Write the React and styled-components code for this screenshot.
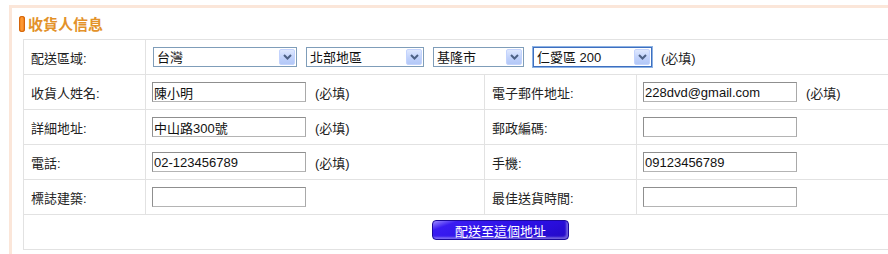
import styled, { createGlobalStyle } from "styled-components"

const GlobalStyle = createGlobalStyle`
    html, body {
        margin: 0;
        padding: 0;
        background: #fff;
    }
    body {
        font-family: "Liberation Sans", "Noto Sans CJK TC", sans-serif;
        font-size: 13px;
        color: #222;
    }
`

const Page = styled.div`
    width: 888px;
    height: 254px;
    overflow: hidden;
`

const Panel = styled.div`
    margin: 5px 0 0 9px;
    width: 1000px;
    border-top: 3px solid #fbe6d9;
    border-left: 3px solid #fbe6d9;
    padding: 0 0 6px 7px;
`

const Heading = styled.h2`
    display: flex;
    align-items: center;
    gap: 3px;
    height: 31px;
    margin: 0;
    font-size: 15px;
    font-weight: bold;
    color: #e3922a;
    font-family: "Liberation Sans", "Noto Sans CJK TC", sans-serif;
`

const Pill = styled.span`
    width: 6px;
    height: 16px;
    border-radius: 3px;
    background: linear-gradient(90deg, #ef7a10 0%, #ff9f3a 50%, #ea7008 100%);
    box-shadow: inset 0 0 0 1px #d4650a;
`

const Table = styled.div`
    margin-left: 4px;
    width: 954px;
    display: grid;
    grid-template-columns: 122px 339px 152px 1fr;
    border-top: 1px solid #e2e2e2;
    border-left: 1px solid #e2e2e2;
`

const Cell = styled.div`
    grid-column: span ${p => p.$span || 1};
    height: 35px;
    box-sizing: border-box;
    border-right: 1px solid #e2e2e2;
    border-bottom: 1px solid #e2e2e2;
    display: flex;
    align-items: center;
    justify-content: ${p => (p.$center ? "center" : "flex-start")};
    gap: 9px;
    padding: ${p => (p.$center ? "0" : p.$label ? "0 0 0 7px" : "0 0 0 6px")};
`

const TextInput = styled.input`
    width: 154px;
    height: 20px;
    box-sizing: border-box;
    border: 1px solid #8f8f8f;
    border-right-color: #a9a9a9;
    border-bottom-color: #b4b4b4;
    padding: 0 1px;
    font-family: "Liberation Sans", "Noto Sans CJK TC", sans-serif;
    font-size: 13px;
    color: #111;
    outline: none;
    background: #fff;
`

const Required = styled.span`
    color: #222;
`

const Selects = styled.div`
    display: flex;
    align-items: center;
    gap: 9px;
    padding-left: 1px;
`

const SelectBox = styled.div`
    width: ${p => p.$w}px;
    height: 20px;
    box-sizing: border-box;
    display: flex;
    align-items: center;
    border: 1px solid ${p => (p.$focus ? "#3d6fc0" : "#7f9db9")};
    box-shadow: ${p => (p.$focus ? "0 0 0 1px #8db2e3" : "none")};
    background: #fff;
    padding-right: 1px;
`

const NativeSelect = styled.select`
    flex: 1;
    min-width: 0;
    height: 18px;
    appearance: none;
    border: none;
    outline: none;
    background: transparent;
    padding: 0 0 0 3px;
    font-family: "Liberation Sans", "Noto Sans CJK TC", sans-serif;
    font-size: 13px;
    color: #111;
`

const ArrowBtn = styled.span`
    width: 16px;
    height: 16px;
    box-sizing: border-box;
    border: 1px solid #c3d3fd;
    border-radius: 2px;
    background: linear-gradient(180deg, #dfe8fe 0%, #c1d2fb 55%, #b3c8f7 100%);
    display: flex;
    align-items: center;
    justify-content: center;
`

const SubmitBtn = styled.button`
    width: 137px;
    height: 20px;
    border-radius: 4px;
    border: 1px solid #1c0a9c;
    background: linear-gradient(160deg, #9c8cff 0%, #3a1cf2 14%, #2b0fe3 60%, #2308c4 100%);
    box-shadow: inset -2px -2px 2px rgba(255, 255, 255, 0.35);
    color: #fff;
    font-family: "Liberation Sans", "Noto Sans CJK TC", sans-serif;
    font-size: 13px;
    padding: 0;
    margin-top: -5px;
    cursor: pointer;
`

function Select({ w, value, focus }) {
    return (
        <SelectBox $w={w} $focus={focus}>
            <NativeSelect defaultValue={value}>
                <option>{value}</option>
            </NativeSelect>
            <ArrowBtn>
                <svg width="9" height="6" viewBox="0 0 9 6">
                    <path d="M1 1 L4.5 4.5 L8 1" fill="none" stroke="#4d6185" strokeWidth="2" />
                </svg>
            </ArrowBtn>
        </SelectBox>
    )
}

function Field({ value, required }) {
    return (
        <>
            <TextInput defaultValue={value} />
            {required && <Required>(必填)</Required>}
        </>
    )
}

const rows = [
    ["收貨人姓名:", "陳小明", true, "電子郵件地址:", "228dvd@gmail.com", true],
    ["詳細地址:", "中山路300號", true, "郵政編碼:", "", false],
    ["電話:", "02-123456789", true, "手機:", "09123456789", false],
    ["標誌建築:", "", false, "最佳送貨時間:", "", false],
]

export default function App() {
    return (
        <Page>
            <GlobalStyle />
            <Panel>
                <Heading>
                    <Pill />
                    收貨人信息
                </Heading>
                <Table>
                    <Cell $label>配送區域:</Cell>
                    <Cell $span={3}>
                        <Selects>
                            <Select w={144} value="台灣" />
                            <Select w={118} value="北部地區" />
                            <Select w={91} value="基隆市" />
                            <Select w={119} value="仁愛區 200" focus />
                            <Required>(必填)</Required>
                        </Selects>
                    </Cell>
                    {rows.map(r => (
                        <>
                            <Cell $label key={r[0]}>{r[0]}</Cell>
                            <Cell><Field value={r[1]} required={r[2]} /></Cell>
                            <Cell $label>{r[3]}</Cell>
                            <Cell><Field value={r[4]} required={r[5]} /></Cell>
                        </>
                    ))}
                    <Cell $span={4} $center>
                        <SubmitBtn>配送至這個地址</SubmitBtn>
                    </Cell>
                </Table>
            </Panel>
        </Page>
    )
}
